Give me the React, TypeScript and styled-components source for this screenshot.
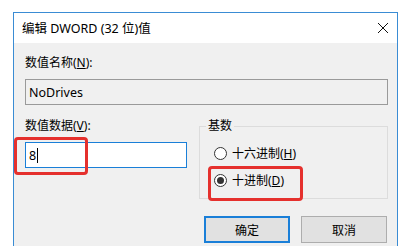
import React from 'react';
import styled, { createGlobalStyle } from 'styled-components';

const GlobalStyle = createGlobalStyle`
    html, body {
        margin: 0;
        padding: 0;
        background: #ffffff;
        overflow: hidden;
    }
    body {
        font-family: 'Noto Sans', 'Noto Sans CJK SC', sans-serif;
        font-size: 12px;
        color: #000000;
    }
`

const Page = styled.div`
    width: 416px;
    height: 246px;
    padding: 12px 0 0 13px;
    box-sizing: border-box;
    overflow: hidden;
`

const Window = styled.div`
    width: 385px;
    height: 250px;
    border: 1px solid #3a8cd4;
    box-sizing: border-box;
    background: #f0f0f0;
    display: flex;
    flex-direction: column;
`

const TitleBar = styled.div`
    height: 30px;
    flex-shrink: 0;
    background: #ffffff;
    display: flex;
    align-items: center;
    justify-content: space-between;
    padding: 0 8px 0 8px;
`

const Title = styled.span`
    font-size: 12.5px;
    line-height: 14px;
    margin-top: 1px;
`

const CloseIcon = styled.svg`
    width: 12px;
    height: 12px;
`

const Body = styled.div`
    padding: 13px 9px 0 11px;
    display: flex;
    flex-direction: column;
`

const Label = styled.div`
    line-height: 14px;
    height: 14px;
    white-space: nowrap;
`

const Key = styled.span`
    text-decoration: underline;
    text-underline-offset: 1px;
`

const ReadonlyBox = styled.div`
    margin-top: 9px;
    height: 26px;
    box-sizing: border-box;
    border: 1px solid #9a9a9a;
    background: #f0f0f0;
    display: flex;
    align-items: center;
    padding-left: 3px;
    font-size: 12.5px;
`

const Row = styled.div`
    margin-top: 14px;
    display: grid;
    grid-template-columns: 162px 189px;
    column-gap: 12px;
`

const Column = styled.div`
    display: flex;
    flex-direction: column;
`

const DataBox = styled.div`
    position: relative;
    margin-top: 9px;
    height: 26px;
    box-sizing: border-box;
    border: 1px solid #1a7fd8;
    background: #ffffff;
    display: flex;
    align-items: center;
    padding-left: 3px;
    font-size: 12.5px;
`

const Caret = styled.span`
    display: inline-block;
    width: 1px;
    height: 15px;
    background: #000000;
    margin-left: 1px;
`

const Mark = styled.div<{ $left: number; $top: number; $w: number; $h: number }>`
    position: absolute;
    left: ${p => p.$left}px;
    top: ${p => p.$top}px;
    width: ${p => p.$w}px;
    height: ${p => p.$h}px;
    box-sizing: border-box;
    border: 3px solid #e5302d;
    border-radius: 4px;
    pointer-events: none;
`

const Group = styled.fieldset`
    margin: 0;
    padding: 10px 0 8px 14px;
    border: 1px solid #dcdcdc;
    display: flex;
    flex-direction: column;
    gap: 7px;
    min-width: 0;
`

const Legend = styled.legend`
    padding: 0 2px;
    margin-left: -8px;
    line-height: 14px;
`

const RadioItem = styled.div`
    position: relative;
    height: 20px;
    display: flex;
    align-items: center;
    gap: 5px;
    white-space: nowrap;
`

const RadioCircle = styled.span<{ $checked?: boolean }>`
    width: 13px;
    height: 13px;
    box-sizing: border-box;
    border: 1px solid #333333;
    border-radius: 50%;
    background: #ffffff;
    display: flex;
    align-items: center;
    justify-content: center;

    &::after {
        content: '';
        width: 7px;
        height: 7px;
        border-radius: 50%;
        background: #333333;
        display: ${p => (p.$checked ? 'block' : 'none')};
    }
`

const ButtonRow = styled.div`
    margin-top: 17px;
    display: flex;
    justify-content: flex-end;
    gap: 11px;
    padding-right: 1px;
`

const Button = styled.div<{ $primary?: boolean }>`
    width: 86px;
    height: 27px;
    box-sizing: border-box;
    background: #e1e1e1;
    border: ${p => (p.$primary ? '2px solid #1a7fd8' : '1px solid #adadad')};
    display: flex;
    align-items: center;
    justify-content: center;
`

export default function App() {
    return (
        <>
            <GlobalStyle />
            <Page>
                <Window>
                    <TitleBar>
                        <Title>编辑 DWORD (32 位)值</Title>
                        <CloseIcon viewBox="0 0 12 12">
                            <path d="M1 1 L11 11 M11 1 L1 11" stroke="#111" strokeWidth="1" fill="none" />
                        </CloseIcon>
                    </TitleBar>
                    <Body>
                        <Label>数值名称(<Key>N</Key>):</Label>
                        <ReadonlyBox>NoDrives</ReadonlyBox>
                        <Row>
                            <Column>
                                <Label>数值数据(<Key>V</Key>):</Label>
                                <DataBox>
                                    8<Caret />
                                    <Mark $left={-12} $top={-6} $w={74} $h={38} />
                                </DataBox>
                            </Column>
                            <Group>
                                <Legend>基数</Legend>
                                <RadioItem>
                                    <RadioCircle />
                                    <span>十六进制(<Key>H</Key>)</span>
                                </RadioItem>
                                <RadioItem>
                                    <RadioCircle $checked />
                                    <span>十进制(<Key>D</Key>)</span>
                                    <Mark $left={-6} $top={-4} $w={95} $h={35} />
                                </RadioItem>
                            </Group>
                        </Row>
                        <ButtonRow>
                            <Button $primary>确定</Button>
                            <Button>取消</Button>
                        </ButtonRow>
                    </Body>
                </Window>
            </Page>
        </>
    );
}
